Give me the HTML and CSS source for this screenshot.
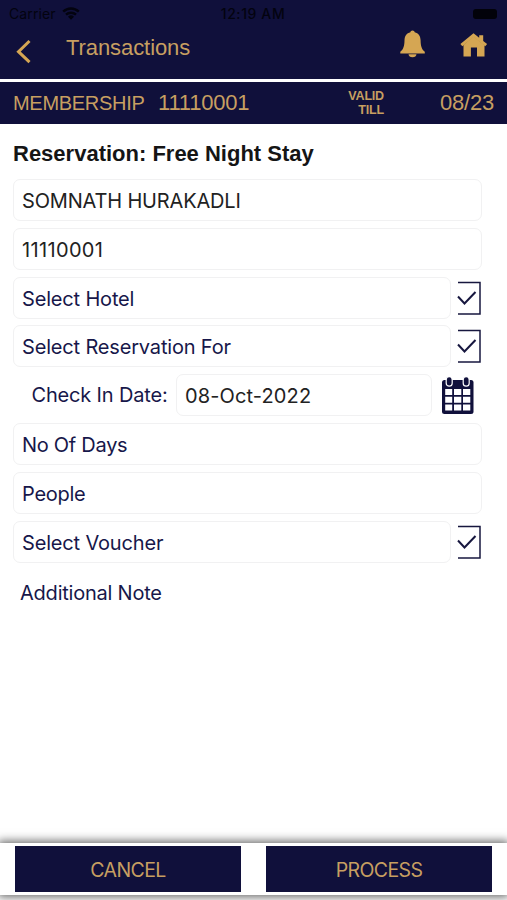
FILE: index.html
```html
<!DOCTYPE html>
<html lang="en">

<head>
    <meta charset="UTF-8">
    <meta name="viewport" content="width=device-width, initial-scale=1.0">
    <title>Transactions</title>
    <link rel="stylesheet" href="styles.css">
</head>

<body>
    <header>
        <div class="status">
            <span class="carrier">Carrier</span>
            <svg class="wifi" width="18" height="13" viewBox="0 0 18 13">
                <path d="M1.2 4.7a11.2 11.2 0 0 1 15.6 0M4 7.7a7.2 7.2 0 0 1 10 0" fill="none" stroke="#03030f" stroke-width="2.4" />
                <path d="M6 9.8a4.3 4.3 0 0 1 6 0L9 12.8z" fill="#03030f" />
            </svg>
            <span class="time">12:19 AM</span>
            <span class="battery"></span>
        </div>
        <div class="navbar">
            <svg class="back" width="16" height="26" viewBox="0 0 16 26">
                <path d="M13.5 2L2.500 12.700l11 10.500" fill="none" stroke="#d5a653" stroke-width="3" />
            </svg>
            <h1 class="title">Transactions</h1>
            <svg class="bell" width="26" height="28" viewBox="0 0 26 28">
                <path d="M12.500.5c1.200 0 2 .8 2.200 1.800 3.800.9 5.800 3.800 5.900 8 .1 5.500.9 9 4.200 11.400v1.800H.3v-1.800c3.300-2.400 4.100-5.900 4.200-11.400.1-4.200 2.100-7.100 5.900-8 .1-1 .9-1.800 2.100-1.800z" />
                <path d="M8.500 24.200h8c-.3 1.900-1.500 3-4 3s-3.700-1.100-4-3z" />
            </svg>
            <svg class="home" width="28" height="24" viewBox="0 0 28 24">
                <path d="M13.500.3l5.700 4.500V2.200h4v5.700l3.900 3.200-1.900 2.200L13.500 4.200 2.300 13.300.4 11.100z" />
                <path d="M13.500 3.500l11 8.700v11.300h-7.500v-9h-6.100v9H3.500V12z" />
            </svg>
        </div>
    </header>
    <section class="membership">
        <span class="member-label">MEMBERSHIP</span>
        <span class="member-no">11110001</span>
        <span class="valid">VALID<br>TILL</span>
        <span class="expiry">08/23</span>
    </section>
    <main>
        <h2>Reservation: Free Night Stay</h2>
        <form>
            <div class="row">
                <div class="field value">SOMNATH HURAKADLI</div>
            </div>
            <div class="row">
                <div class="field value number">11110001</div>
            </div>
            <div class="row">
                <div class="field">Select Hotel</div>
                <svg class="check" width="25" height="34" viewBox="0 0 25 34">
                    <path class="box" d="M1 1.500h22v31.500H1" />
                    <path class="tick" d="M1 15.500l6.500 7L18.500 11" />
                </svg>
            </div>
            <div class="row">
                <div class="field">Select Reservation For</div>
                <svg class="check" width="25" height="34" viewBox="0 0 25 34">
                    <path class="box" d="M1 1.500h22v31.500H1" />
                    <path class="tick" d="M1 15.500l6.500 7L18.500 11" />
                </svg>
            </div>
            <div class="row">
                <label class="date-label">Check In Date:</label>
                <div class="field value date">08-Oct-2022</div>
                <svg class="calendar" width="34" height="38" viewBox="0 0 34 38">
                    <rect x="1" y="4" width="31.500" height="34" rx="2.500" fill="#10103b" />
                    <path d="M4.200 13h7v6h-7zM13 13h7.300v6H13zM22 13h7.300v6H22zM4.200 20.800h7v6h-7zM13 20.800h7.300v6H13zM22 20.800h7.300v6H22zM4.200 28.600h7v6h-7zM13 28.600h7.300v6H13zM22 28.600h7.300v6H22z" fill="#fff" />
                    <rect x="5.200" y=".7" width="6" height="9.500" rx="3" class="ring" />
                    <rect x="22.200" y=".7" width="6" height="9.500" rx="3" class="ring" />
                </svg>
            </div>
            <div class="row">
                <div class="field days">No Of Days</div>
            </div>
            <div class="row">
                <div class="field days">People</div>
            </div>
            <div class="row">
                <div class="field">Select Voucher</div>
                <svg class="check" width="25" height="34" viewBox="0 0 25 34">
                    <path class="box" d="M1 1.500h22v31.500H1" />
                    <path class="tick" d="M1 15.500l6.500 7L18.500 11" />
                </svg>
            </div>
            <div class="note">Additional Note</div>
        </form>
    </main>
    <footer>
        <button type="button">CANCEL</button>
        <button type="button">PROCESS</button>
    </footer>
</body>

</html>
```

FILE: styles.css
```css
* {
    box-sizing: border-box;
}

body {
    margin: 0;
    height: 900px;
    display: flex;
    flex-direction: column;
    overflow: hidden;
    background-color: #fff;
    color: #17174a;
    font-family: Inter, "Liberation Sans", sans-serif;
    font-size: 20px;
    letter-spacing: -0.17px;
    white-space: nowrap;
}

svg {
    display: block;
    flex: none;
}

header {
    height: 79px;
    background-color: #10103b;
}

.status {
    display: grid;
    grid-template-columns: 53px 1fr auto 1fr;
    align-items: center;
    height: 27px;
    padding: 0 10px 0 9px;
    color: #03030f;
    font-size: 14px;
    letter-spacing: 0.1px;
}

.time {
    font-weight: 500;
    margin-left: -53px;
    letter-spacing: 0.6px;
}

.battery {
    justify-self: end;
    width: 24px;
    height: 10px;
    border-radius: 3px;
    background-color: #02020a;
}

.navbar {
    display: flex;
    align-items: flex-start;
    padding: 3px 19px 0 16px;
    fill: #d5a653;
}

.back {
    margin-top: 9px;
}

.title {
    flex: 1;
    margin: 5px 0 0 34px;
    color: #c79f61;
    font: 22px/26px "Liberation Sans", sans-serif;
    letter-spacing: -0.08px;
}

.bell {
    margin-right: 34px;
}

.home {
    margin-top: 3px;
}

.membership {
    display: flex;
    align-items: center;
    height: 45px;
    padding: 0 13px;
    border-top: 3px solid #fff;
    background-color: #10103b;
    color: #c79f61;
    font: 22px/26px "Liberation Sans", sans-serif;
    letter-spacing: -0.2px;
}

.member-label {
    width: 145px;
    font-size: 20px;
    letter-spacing: -0.3px;
}

.valid {
    margin-left: auto;
    margin-right: 56px;
    padding-top: 1px;
    text-align: right;
    font-size: 12.5px;
    line-height: 13.5px;
    font-weight: bold;
}

main {
    flex: 1;
    padding: 17px 25px 0 13px;
}

h2 {
    margin: 0 0 12px;
    color: #151515;
    font: bold 22px/26px "Liberation Sans", sans-serif;
    letter-spacing: 0;
}

form {
    display: flex;
    flex-direction: column;
    gap: 6.8px;
}

.row {
    display: flex;
    align-items: center;
    height: 42px;
}

.field {
    flex: 1;
    display: flex;
    align-items: center;
    height: 42px;
    padding: 2px 8px 0;
    border: 1.5px solid #f1f1f2;
    border-radius: 7px;
}

.value {
    color: #222;
}

.number {
    letter-spacing: 0.35px;
}

.date {
    letter-spacing: 0.13px;
}

.days {
    letter-spacing: -0.28px;
}

.check {
    margin: 0 0 0 6px;
    fill: none;
    stroke: #17173f;
}

.box {
    stroke-width: 1.5;
}

.tick {
    stroke-width: 2;
}

.date-label {
    width: 163px;
    padding-left: 18.5px;
}

.calendar {
    margin: 0 7px 0 9px;
}

.ring {
    fill: #10103b;
    stroke: #fff;
    stroke-width: 1.2;
}

.note {
    padding: 12px 7px 0;
    line-height: 24px;
    letter-spacing: -0.22px;
}

footer {
    display: flex;
    gap: 25px;
    height: 52px;
    margin-bottom: 5px;
    padding: 3px 15px;
    background-color: #fff;
    box-shadow: 0 0 9px 2px rgba(0, 0, 0, 0.6);
}

button {
    flex: 1;
    height: 46px;
    padding: 2px 0 0;
    border: 0;
    background-color: #10103b;
    color: #c79f61;
    font-family: inherit;
    font-size: 19.5px;
    letter-spacing: -0.6px;
}
```
